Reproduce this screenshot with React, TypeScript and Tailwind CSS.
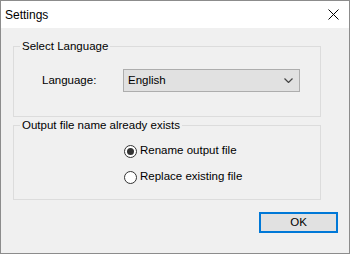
import { useState } from 'react'

function Radio({ checked, label, onClick }: { checked: boolean; label: string; onClick: () => void }) {
  return (
    <label className="flex items-center h-[16px] gap-[3px] cursor-default" onClick={onClick}>
      <span className="w-[13px] h-[13px] rounded-full border border-[#333] bg-white flex items-center justify-center">
        {checked && <span className="w-[7px] h-[7px] rounded-full bg-[#333]" />}
      </span>
      <span>{label}</span>
    </label>
  )
}

export default function App() {
  const [mode, setMode] = useState<'rename' | 'replace'>('rename')

  return (
    <div className="w-[350px] h-[254px] flex flex-col border border-[#8c8c8c] bg-[#f0f0f0] text-black font-['Liberation_Sans',Arial,sans-serif]">
      {/* Title bar */}
      <div className="h-[27px] bg-white flex items-center justify-between pl-[4px] pr-[10px] text-[12px]">
        <span>Settings</span>
        <svg width="11" height="11" viewBox="0 0 11 11" className="text-black">
          <path d="M0.5 0.5 L10.5 10.5 M10.5 0.5 L0.5 10.5" stroke="currentColor" strokeWidth="1" fill="none" />
        </svg>
      </div>

      <div className="flex-1 flex flex-col pl-[12px] pr-[11px] pt-[11px] text-[11.5px]">
        <fieldset className="w-[308px] border border-[#dcdcdc]">
          <legend className="ml-[6px] px-[2px] leading-[14px]">Select Language</legend>
          <div className="flex items-center pl-[28px] pt-[16px] pb-[24px]">
            <span className="w-[81px]">Language:</span>
            <div className="w-[177px] h-[23px] border border-[#adadad] bg-[#e1e1e1] flex items-center justify-between pl-[4px] pr-[6px]">
              <span>English</span>
              <svg width="9" height="5" viewBox="0 0 9 5">
                <path d="M0.5 0.5 L4.5 4.5 L8.5 0.5" stroke="#444" strokeWidth="1.2" fill="none" />
              </svg>
            </div>
          </div>
        </fieldset>

        <fieldset className="w-[308px] mt-[1px] border border-[#dcdcdc]">
          <legend className="ml-[6px] px-[2px] leading-[14px]">Output file name already exists</legend>
          <div className="flex flex-col gap-[10px] pl-[110px] pt-[11px] pb-[14px]">
            <Radio checked={mode === 'rename'} label="Rename output file" onClick={() => setMode('rename')} />
            <Radio checked={mode === 'replace'} label="Replace existing file" onClick={() => setMode('replace')} />
          </div>
        </fieldset>

        <button className="self-end mt-[12px] w-[79px] h-[21px] border-2 border-[#0078d7] bg-[#e1e1e1] flex items-center justify-center">
          OK
        </button>
      </div>
    </div>
  )
}
